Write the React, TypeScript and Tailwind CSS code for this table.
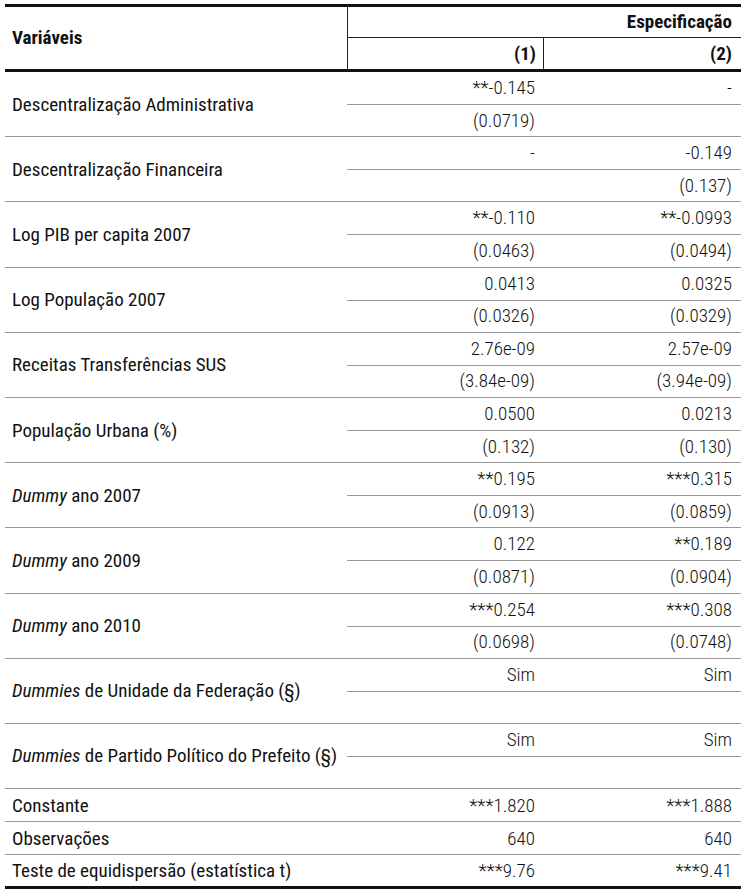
import React from 'react';

type Block = {
	label: React.ReactNode;
	coef: [string, string];
	se: [string, string];
};

const blocks: Block[] = [
	{ label: 'Descentralização Administrativa', coef: ['**-0.145', '-'], se: ['(0.0719)', ''] },
	{ label: 'Descentralização Financeira', coef: ['-', '-0.149'], se: ['', '(0.137)'] },
	{ label: 'Log PIB per capita 2007', coef: ['**-0.110', '**-0.0993'], se: ['(0.0463)', '(0.0494)'] },
	{ label: 'Log População 2007', coef: ['0.0413', '0.0325'], se: ['(0.0326)', '(0.0329)'] },
	{ label: 'Receitas Transferências SUS', coef: ['2.76e-09', '2.57e-09'], se: ['(3.84e-09)', '(3.94e-09)'] },
	{ label: 'População Urbana (%)', coef: ['0.0500', '0.0213'], se: ['(0.132)', '(0.130)'] },
	{ label: <><i>Dummy</i> ano 2007</>, coef: ['**0.195', '***0.315'], se: ['(0.0913)', '(0.0859)'] },
	{ label: <><i>Dummy</i> ano 2009</>, coef: ['0.122', '**0.189'], se: ['(0.0871)', '(0.0904)'] },
	{ label: <><i>Dummy</i> ano 2010</>, coef: ['***0.254', '***0.308'], se: ['(0.0698)', '(0.0748)'] },
	{ label: <><i>Dummies</i> de Unidade da Federação (§)</>, coef: ['Sim', 'Sim'], se: ['', ''] },
	{ label: <><i>Dummies</i> de Partido Político do Prefeito (§)</>, coef: ['Sim', 'Sim'], se: ['', ''] }
];

const totals: [string, string, string][] = [
	['Constante', '***1.820', '***1.888'],
	['Observações', '640', '640'],
	['Teste de equidispersão (estatística t)', '***9.76', '***9.41']
];

const Val = ({ children }: { children: React.ReactNode }) => (
	<div className="w-[196px] shrink-0 pr-[8px] text-right font-light">{children}</div>
);
const Val2 = ({ children }: { children: React.ReactNode }) => (
	<div className="w-[198px] shrink-0 pr-[9px] text-right font-light">{children}</div>
);

export default function App() {
	return (
		<div
			className="bg-white min-h-[895px] pt-[4px] pl-[5px] text-[19px] leading-none text-[#111]"
			style={{ fontFamily: '"Roboto Condensed", Roboto, sans-serif' }}
		>
			<div className="w-[736px] border-t-[3px] border-b-[3px] border-[#111]">
				{/* header */}
				<div className="flex border-b-[3px] border-[#111]">
					<div className="w-[342px] shrink-0 flex items-center pl-[7px] pb-[2px] font-bold">Variáveis</div>
					<div className="flex-1 border-l border-[#222]">
						<div className="h-[31px] border-b border-[#222] flex items-center justify-end pr-[9px] pb-[2px] font-bold">
							Especificação
						</div>
						<div className="h-[31px] flex font-bold">
							<div className="w-[196px] border-r border-[#222] flex items-center justify-end pr-[7px]">(1)</div>
							<div className="flex-1 flex items-center justify-end pr-[9px]">(2)</div>
						</div>
					</div>
				</div>

				{blocks.map((b, i) => (
					<div key={i} className="flex border-b border-[#999]">
						<div className="w-[342px] shrink-0 flex items-center pl-[7px] whitespace-nowrap">
							<span>{b.label}</span>
						</div>
						<div className="flex-1">
							<div className="h-[33px] flex items-center justify-end border-b border-[#999] pb-[1px]">
								<Val>{b.coef[0]}</Val>
								<Val2>{b.coef[1]}</Val2>
							</div>
							<div className="h-[31.2px] flex items-center justify-end pb-[1px]">
								<Val>{b.se[0]}</Val>
								<Val2>{b.se[1]}</Val2>
							</div>
						</div>
					</div>
				))}

				{totals.map((t, i) => (
					<div
						key={i}
						className={
							i < totals.length - 1
								? 'h-[33px] flex items-center border-b border-[#999]'
								: 'h-[31px] flex items-center'
						}
					>
						<div className="flex-1 pl-[7px]">{t[0]}</div>
						<Val>{t[1]}</Val>
						<Val2>{t[2]}</Val2>
					</div>
				))}
			</div>
		</div>
	);
}
